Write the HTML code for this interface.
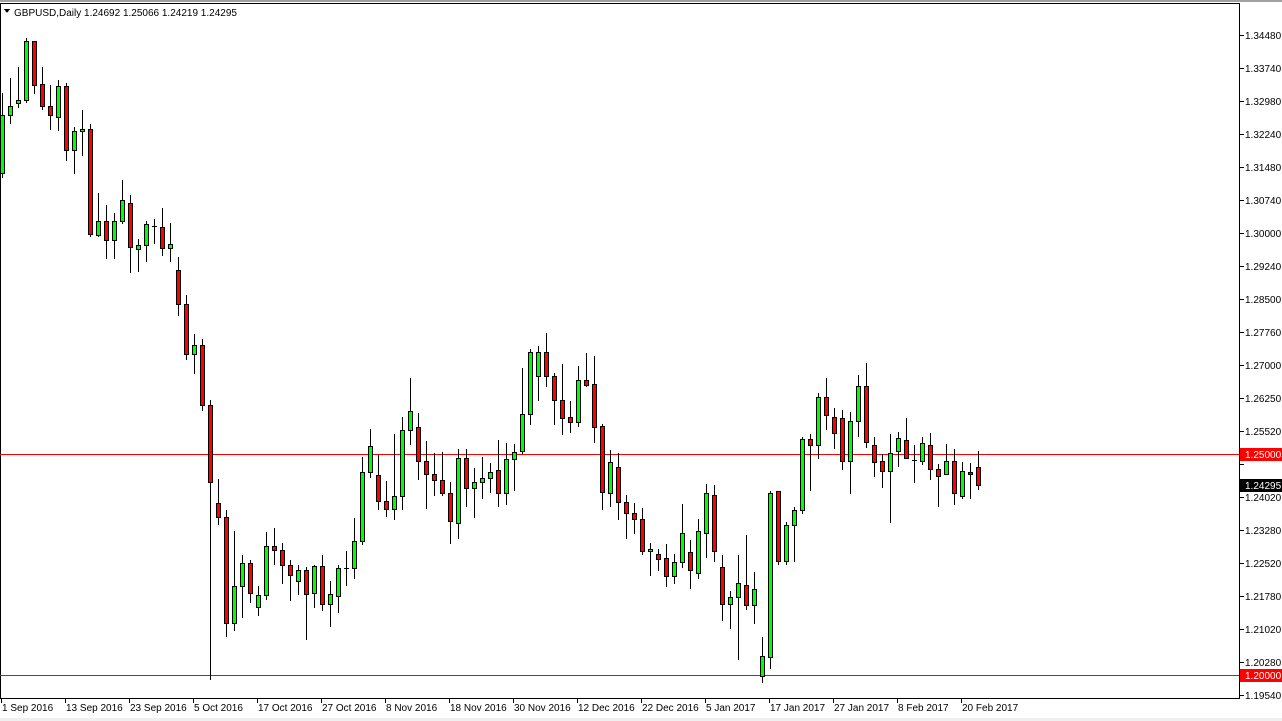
<!DOCTYPE html>
<html><head><meta charset="utf-8">
<style>
html,body{margin:0;padding:0;background:#fff;}
body{width:1282px;height:721px;position:relative;overflow:hidden;font-family:"Liberation Sans",sans-serif;}
svg{position:absolute;left:0;top:0;}
text{font-family:"Liberation Sans",sans-serif;font-size:10px;}
</style></head><body>
<svg id="s" width="1282" height="721" xmlns="http://www.w3.org/2000/svg" shape-rendering="crispEdges">
<rect x="0" y="0" width="1282" height="2" fill="#a0a0a0"/>
<rect x="0" y="718" width="1282" height="3" fill="#f0f0f0"/>
<line x1="0.5" y1="3" x2="0.5" y2="698" stroke="#000"/>
<line x1="0" y1="3.5" x2="1240" y2="3.5" stroke="#000"/>
<line x1="1239.5" y1="3" x2="1239.5" y2="698" stroke="#000"/>
<line x1="0" y1="698.5" x2="1240" y2="698.5" stroke="#000"/>
<line x1="0" y1="454.5" x2="1239" y2="454.5" stroke="#ff0000"/>
<line x1="0" y1="675.5" x2="1239" y2="675.5" stroke="#ff0000"/>
<g id="candles"></g>
<g id="axis" fill="#000"></g>
<polygon points="4,9 10,9 7,13" fill="#000"/>
<text x="14" y="16">GBPUSD,Daily  1.24692 1.25066 1.24219 1.24295</text>
<rect x="1240" y="448" width="42" height="13" fill="#ff0000"/>
<text x="1245" y="458" fill="#fff">1.25000</text>
<rect x="1240" y="479" width="42" height="13" fill="#000"/>
<text x="1245" y="489" fill="#fff">1.24295</text>
<rect x="1240" y="669" width="42" height="13" fill="#ff0000"/>
<text x="1245" y="679" fill="#fff">1.20000</text>
<g id="dates"></g>
</svg>
<script>
var D=[
[203,340,150,350,'g'],[180,203,115,220,'g'],[167,174,88,182,'g'],[25,167,18,172,'g'],[25,130,25,150,'r'],
[129,180,88,187,'r'],[180,201,131,235,'r'],[133,206,119,237,'g'],[133,286,126,308,'r'],[241,286,231,340,'g'],
[236,241,190,297,'g'],[236,484,224,489,'r'],[455,487,387,489,'g'],[455,498,416,542,'r'],[455,498,435,542,'g'],
[404,455,356,459,'g'],[411,515,392,575,'r'],[512,521,497,573,'g'],[462,512,455,550,'g'],[465,466,449,505,'d'],
[467,519,423,535,'r'],[509,519,459,550,'g'],[571,652,539,676,'r'],[652,771,630,781,'r'],[748,771,722,814,'g'],
[748,890,734,902,'r'],[890,1073,880,1543,'r'],[1125,1156,1067,1173,'r'],[1156,1408,1140,1441,'r'],[1320,1408,1190,1425,'g'],
[1267,1322,1247,1395,'g'],[1267,1337,1259,1358,'r'],[1343,1372,1322,1391,'g'],[1227,1343,1193,1351,'g'],[1227,1236,1183,1268,'r'],
[1236,1270,1219,1313,'r'],[1270,1296,1259,1354,'r'],[1284,1308,1272,1339,'g'],[1284,1339,1277,1448,'r'],[1274,1337,1272,1370,'g'],
[1274,1365,1247,1377,'r'],[1339,1365,1309,1415,'g'],[1279,1346,1272,1382,'g'],[1278,1279,1238,1318,'d'],[1215,1279,1159,1303,'g'],
[1051,1215,1015,1222,'g'],[989,1051,948,1063,'g'],[1058,1120,1010,1137,'r'],[1120,1139,1072,1155,'r'],[1108,1139,960,1163,'g'],
[951,1108,919,1137,'g'],[906,951,827,983,'g'],[944,1024,910,1068,'r'],[1024,1056,976,1135,'r'],[1056,1070,1005,1104,'r'],
[1070,1101,1003,1106,'r'],[1101,1167,1075,1218,'r'],[1018,1172,995,1206,'g'],[1018,1089,995,1130,'r'],[1075,1089,1041,1156,'g'],
[1065,1075,1015,1111,'g'],[1051,1065,1029,1097,'g'],[1046,1099,974,1130,'r'],[1020,1099,981,1127,'g'],[1003,1020,984,1094,'g'],
[913,1001,803,1005,'g'],[766,913,758,935,'g'],[766,822,751,878,'g'],[766,822,720,845,'r'],[821,880,816,935,'r'],
[878,921,794,959,'r'],[920,932,881,954,'r'],[832,932,798,940,'g'],[832,844,767,847,'r'],[842,944,774,978,'r'],
[942,1097,937,1139,'r'],[1027,1099,998,1132,'g'],[1039,1122,1005,1161,'r'],[1122,1148,1105,1206,'r'],[1148,1163,1124,1194,'r'],
[1163,1239,1136,1244,'r'],[1232,1239,1220,1294,'g'],[1246,1256,1232,1282,'r'],[1255,1298,1221,1322,'r'],[1263,1298,1245,1313,'g'],
[1194,1263,1126,1277,'g'],[1241,1284,1212,1325,'r'],[1191,1289,1162,1301,'g'],[1101,1196,1079,1251,'g'],[1106,1237,1081,1261,'r'],
[1277,1364,1248,1403,'r'],[1348,1364,1333,1422,'g'],[1315,1348,1247,1494,'g'],[1318,1367,1200,1375,'r'],[1329,1367,1288,1408,'g'],
[1488,1535,1442,1549,'g'],[1099,1489,1095,1516,'g'],[1096,1261,1096,1268,'r'],[1175,1261,1170,1268,'g'],[1141,1175,1133,1261,'g'],
[972,1141,967,1147,'g'],[972,987,960,1094,'r'],[873,987,862,1018,'g'],[871,915,827,949,'r'],[920,958,898,993,'r'],
[922,1025,903,1044,'r'],[930,1025,908,1101,'g'],[847,930,820,964,'g'],[847,980,791,991,'r'],[985,1027,967,1060,'r'],
[1025,1047,1008,1085,'r'],[1004,1047,960,1170,'g'],[970,1001,955,1036,'g'],[973,1016,922,1018,'r'],[1021,1022,986,1073,'d'],
[982,1023,967,1031,'g'],[985,1044,957,1068,'r'],[1044,1060,1030,1132,'r'],[1023,1054,984,1056,'g'],[1023,1101,995,1127,'r'],
[1049,1108,1026,1111,'g'],[1051,1055,1029,1113,'r'],[1039,1082,1000,1090,'r']
];
var NS='http://www.w3.org/2000/svg';
function Y(z){return Math.round(30+z/2.376);}
function el(t,a,p){var e=document.createElementNS(NS,t);for(var k in a)e.setAttribute(k,a[k]);p.appendChild(e);return e;}
var g=document.getElementById('candles');
D.forEach(function(c,i){
 var cx=2+8*i;var t=Y(c[0]),b=Y(c[1]),wt=Y(c[2]),wb=Y(c[3]);
 el('line',{x1:cx+0.5,y1:wt,x2:cx+0.5,y2:wb+1,stroke:'#000'},g);
 if(c[4]=='d'){el('line',{x1:cx-2,y1:t+0.5,x2:cx+3,y2:t+0.5,stroke:'#000'},g);}
 else{ if(b-t<2)b=t+2; el('rect',{x:cx-1.5,y:t+0.5,width:4,height:b-t,fill:c[4]=='g'?'#00ff00':'#ff0000',stroke:'#000'},g);}
});
var ax=document.getElementById('axis');
var L=['1.34480','1.33740','1.32980','1.32240','1.31480','1.30740','1.30000','1.29240','1.28500','1.27760','1.27000','1.26250','1.25520','1.24760','1.24020','1.23280','1.22520','1.21780','1.21020','1.20280','1.19540'];
L.forEach(function(s,k){var y=35+33*k;
 el('line',{x1:1240,y1:y+0.5,x2:1244,y2:y+0.5,stroke:'#000'},ax);
 if(k==13)return;
 var t=el('text',{x:1245,y:y+4},ax);t.textContent=s;});
var dg=document.getElementById('dates');
var DL=['1 Sep 2016','13 Sep 2016','23 Sep 2016','5 Oct 2016','17 Oct 2016','27 Oct 2016','8 Nov 2016','18 Nov 2016','30 Nov 2016','12 Dec 2016','22 Dec 2016','5 Jan 2017','17 Jan 2017','27 Jan 2017','8 Feb 2017','20 Feb 2017'];
DL.forEach(function(s,k){var x=1+64*k;
 el('line',{x1:x+0.5,y1:699,x2:x+0.5,y2:703,stroke:'#000'},dg);
 var t=el('text',{x:x+1,y:711},dg);t.textContent=s;});
</script>
</body></html>
